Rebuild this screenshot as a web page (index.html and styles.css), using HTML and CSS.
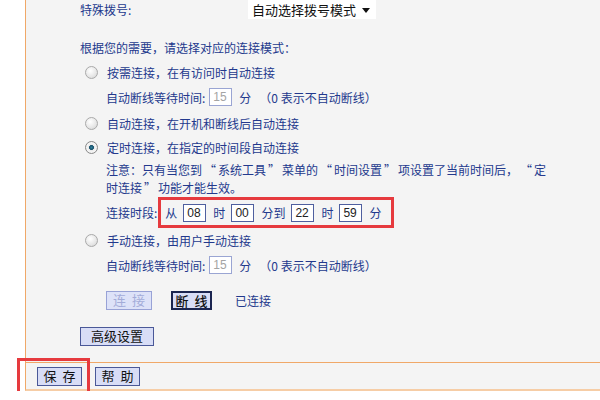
FILE: index.html
```html
<!DOCTYPE html>
<html lang="zh-CN">
<head>
    <meta charset="UTF-8">
    <meta name="viewport" content="width=device-width, initial-scale=1.0">
    <title>WAN口设置</title>
    <link rel="stylesheet" href="styles.css">
</head>
<body>
    <div class="panel">
        <div class="content">
            <div class="row dial">
                <span class="dial-label">特殊拨号:</span>
                <div class="select">自动选择拨号模式<span class="arrow"></span></div>
            </div>

            <div class="row intro">根据您的需要，请选择对应的连接模式：</div>

            <div class="row radio-row r1"><span class="radio"></span>按需连接，在有访问时自动连接</div>
            <div class="row sub s1">自动断线等待时间: <span class="box off">15</span>分 <span class="hint">（0 表示不自动断线）</span></div>

            <div class="row radio-row r2"><span class="radio"></span>自动连接，在开机和断线后自动连接</div>
            <div class="row radio-row"><span class="radio on"></span>定时连接，在指定的时间段自动连接</div>

            <div class="note">注意：只有当您到<span class="q">“</span>系统工具<span class="q">”</span>菜单的<span class="q">“</span>时间设置<span class="q">”</span>项设置了当前时间后，<span class="q">“</span>定<br>时连接<span class="q">”</span>功能才能生效。</div>

            <div class="row sub time">连接时段:
                <span class="mark-box">从<span class="box">08</span>时<span class="box">00</span>分到<span class="box">22</span>时<span class="box">59</span>分</span>
            </div>

            <div class="row radio-row"><span class="radio"></span>手动连接，由用户手动连接</div>
            <div class="row sub s2">自动断线等待时间: <span class="box off">15</span>分 <span class="hint">（0 表示不自动断线）</span></div>

            <div class="row sub btns">
                <button class="btn spaced disabled">连 接</button>
                <button class="btn spaced focus">断 线</button>
                <span class="status">已连接</span>
            </div>

            <div class="row adv"><button class="btn wide">高级设置</button></div>
        </div>

        <div class="footer">
            <span class="mark"><button class="btn spaced">保 存</button></span>
            <button class="btn spaced">帮 助</button>
        </div>
    </div>
</body>
</html>
```

FILE: styles.css
```css
body {
    margin: 0;
    background: #fff;
    font-family: "Noto Sans CJK SC", sans-serif;
    font-size: 12px;
    color: #23398d;
}
.panel {
    margin-left: 25px;
    border-left: 1px solid #f0a868;
    border-bottom: 2px solid #f6cda6;
    background: #f4f4f4;
}
.content {
    height: 362px;
    padding-left: 54px;
    display: flex;
    flex-direction: column;
}
.row {
    height: 24px;
    display: flex;
    align-items: center;
    white-space: nowrap;
}
.dial {
    height: 19px;
}
.dial-label {
    width: 168px;
}
.select {
    width: 124px;
    height: 19px;
    padding-left: 4px;
    background: #fff;
    color: #111;
    font-size: 13px;
    display: flex;
    align-items: center;
    position: relative;
}
.arrow {
    position: absolute;
    right: 6px;
    top: 8px;
    border-left: 4px solid transparent;
    border-right: 4px solid transparent;
    border-top: 5px solid #111;
}
.intro {
    height: 20px;
    margin-top: 18px;
}
.r1 {
    margin-top: 3px;
}
.s1, .s2 {
    margin-top: 1px;
}
.r2 {
    margin-top: 2px;
}
.radio-row {
    padding-left: 5px;
}
.radio {
    width: 11px;
    height: 11px;
    margin-right: 9px;
    border: 1px solid #a9a9a9;
    border-radius: 50%;
    background: radial-gradient(circle at 40% 35%, #fff 0%, #e6e6e6 60%, #cfcfcf 100%);
    box-sizing: content-box;
}
.radio.on {
    background: radial-gradient(circle at 50% 50%, #2f7f9c 0, #17506a 28%, #e8e8e8 34%, #f6f6f6 60%, #d4d4d4 100%);
    border-color: #8a8a8a;
}
.sub {
    padding-left: 26px;
}
.box {
    width: 18px;
    height: 16px;
    margin: 0 7px 0 5px;
    padding-left: 3px;
    border: 1px solid #4f5f9f;
    background: #fff;
    color: #222;
    font-family: "Liberation Sans", sans-serif;
    font-size: 12px;
    line-height: 16px;
}
.box.off {
    border-color: #9aa5d3;
    color: #a4a4a4;
    margin-left: 4px;
}
.hint {
    margin-left: 8px;
}
.note {
    margin-top: 2px;
    padding-left: 26px;
    line-height: 18px;
    white-space: nowrap;
}
.q {
    display: inline-block;
    width: 12px;
    text-align: center;
    margin: 0 2px;
}
.time {
    height: 31px;
}
.mark-box {
    display: inline-flex;
    align-items: center;
    height: 25px;
    margin-left: 1px;
    padding: 0 10px 0 4px;
    border: 3px solid #e63a3e;
}
.mark-box .box {
    margin: 0 7px 0 6px;
}
.btns {
    margin-top: 11px;
}
.btn {
    height: 19px;
    padding: 0;
    border: 1px solid #4a5898;
    background: #d8ddf6;
    color: #111;
    font-family: "Noto Sans CJK SC", sans-serif;
    font-size: 13px;
    line-height: 16px;
    cursor: pointer;
}
.btn.spaced {
    word-spacing: 3px;
}
.btn.disabled {
    width: 46px;
    border-color: #98a2d6;
    color: #a3acd8;
    background: #dde2f8;
}
.btn.focus {
    width: 41px;
    margin-left: 19px;
    border: 2px solid #1b2550;
    font-weight: 500;
}
.status {
    margin-left: 23px;
}
.adv {
    margin-top: 12px;
}
.btn.wide {
    width: 74px;
}
.footer {
    height: 26px;
    border-top: 1px solid #f0a868;
    padding-left: 11px;
    display: flex;
    align-items: center;
}
.footer .btn {
    width: 45px;
    margin-right: 13px;
}
.mark {
    position: relative;
    display: flex;
}
.mark::after {
    content: "";
    position: absolute;
    left: -20px;
    top: -9px;
    right: 5px;
    bottom: -9px;
    border: 3px solid #e63a3e;
    pointer-events: none;
}
```
